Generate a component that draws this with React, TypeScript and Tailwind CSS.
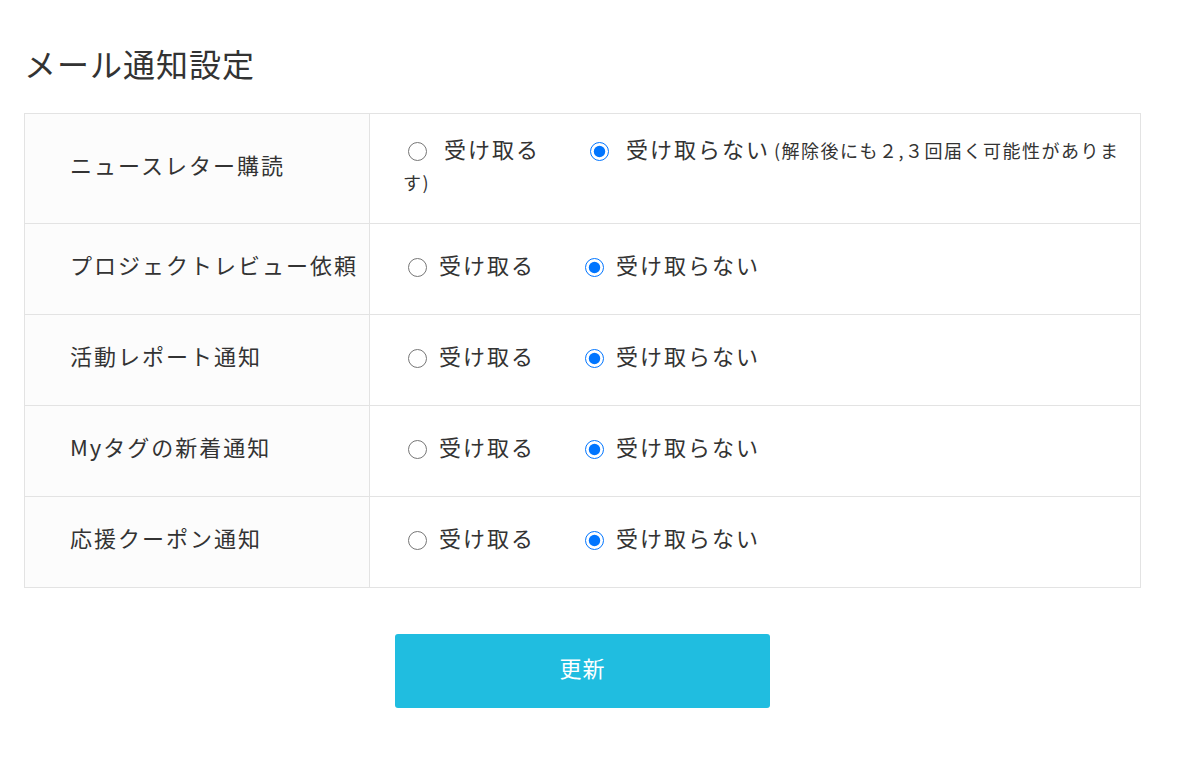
import React from "react";

const FONT = '"Noto Sans CJK JP", "Noto Sans", sans-serif';

function Radio({ checked }: { checked: boolean }) {
  return (
    <input
      type="radio"
      readOnly
      checked={checked}
      className="m-0 inline-block h-[19px] w-[19px] align-[-3px]"
    />
  );
}

const rows = [
  "プロジェクトレビュー依頼",
  "活動レポート通知",
  "Myタグの新着通知",
  "応援クーポン通知",
];

export default function App() {
  return (
    <div className="bg-white text-[#333] min-h-[760px] px-[24px]" style={{ fontFamily: FONT }}>
      <h1 className="pt-[41px] text-[32px] leading-[45px] tracking-[1px] font-normal">メール通知設定</h1>
      <table className="mt-[27px] w-[1117px] border-collapse">
        <tbody>
          <tr className="h-[110px]">
            <td className="w-[345px] border border-[#e3e3e3] bg-[#fcfcfc] pl-[45px] pb-[8px] text-[22px] tracking-[2px] align-middle">
              ニュースレター購読
            </td>
            <td className="border border-[#e3e3e3] pl-[33px] pr-[16px] pb-[8px] align-middle text-[22px] leading-[30px] tracking-[2px]">
              <span className="ml-[5px]"><Radio checked={false} /></span>
              <span className="ml-[17px]">受け取る</span>
              <span className="ml-[50px]"><Radio checked={true} /></span>
              <span className="ml-[17px]">受け取らない</span>
              <span className="ml-[4px] text-[18px] tracking-[1.5px]">(解除後にも２,３回届く可能性があります)</span>
            </td>
          </tr>
          {rows.map((r) => (
            <tr key={r} className="h-[91px]">
              <td className="w-[345px] border border-[#e3e3e3] bg-[#fcfcfc] pl-[45px] pb-[10px] text-[22px] tracking-[2px] align-middle">
                {r}
              </td>
              <td className="border border-[#e3e3e3] pl-[33px] pb-[10px] align-middle text-[22px] leading-[30px] tracking-[2px]">
                <span className="ml-[5px]"><Radio checked={false} /></span>
                <span className="ml-[12px]">受け取る</span>
                <span className="ml-[50px]"><Radio checked={true} /></span>
                <span className="ml-[12px]">受け取らない</span>
              </td>
            </tr>
          ))}
        </tbody>
      </table>
      <div className="mt-[46px] flex w-[1117px] justify-center">
        <button className="h-[74px] w-[375px] rounded-[3px] bg-[#20bde0] pb-[8px] text-[22px] tracking-[1px] text-white">
          更新
        </button>
      </div>
    </div>
  );
}
